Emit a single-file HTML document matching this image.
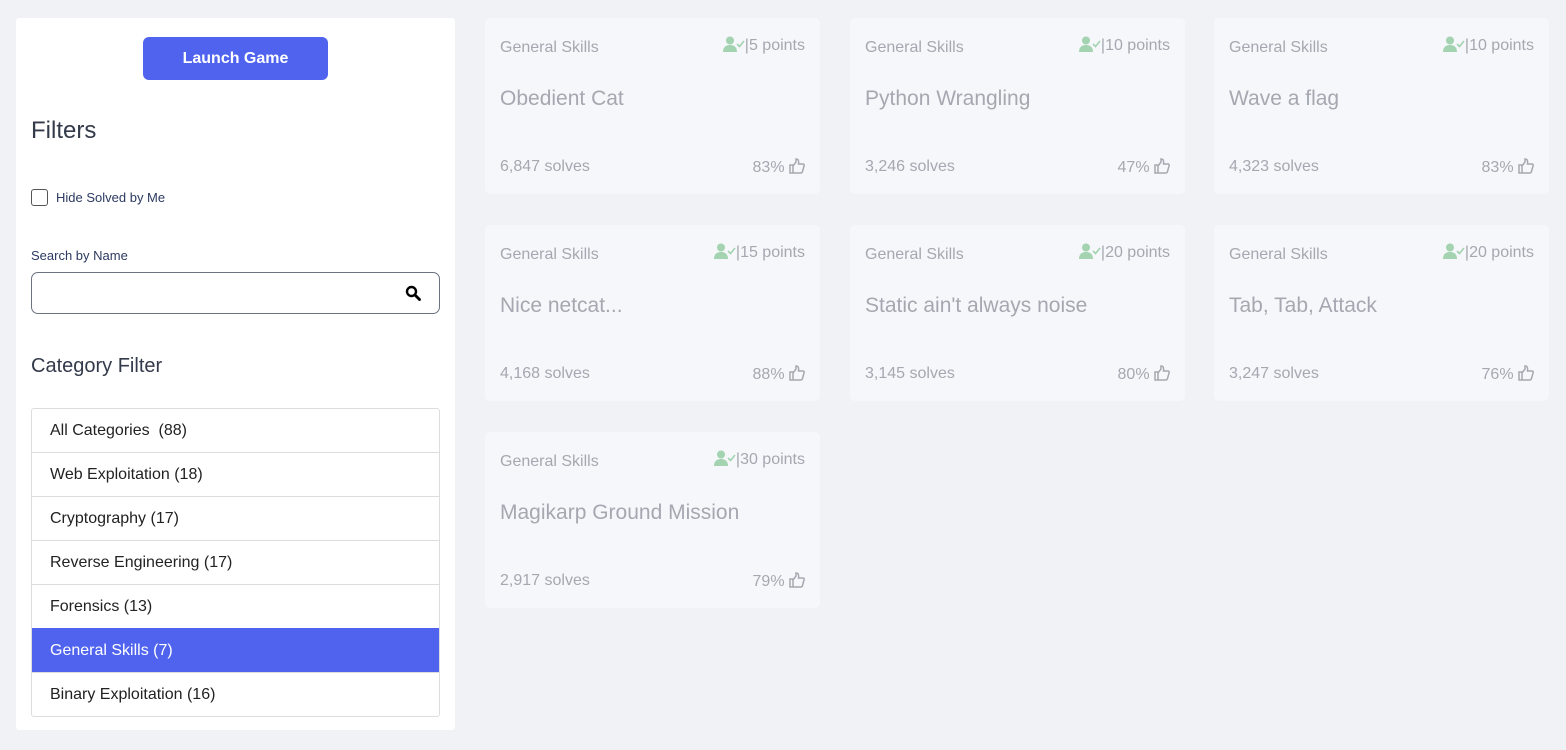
<!DOCTYPE html>
<html><head><style>
body{margin:0;width:1566px;height:750px;background:#f1f2f6;font-family:"Liberation Sans",sans-serif;position:relative;overflow:hidden}
.side{position:absolute;left:16px;top:18px;width:439px;height:712px;background:#fff;border-radius:3px}
.btn{position:absolute;left:127px;top:19px;width:185px;height:43px;background:#4f63ee;color:#fff;border-radius:6px;text-align:center;line-height:43px;font-size:16px;font-weight:bold}
.h{position:absolute;left:15px;color:#333a4a;font-size:22px}
.cb{position:absolute;left:15px;top:171px;width:15px;height:15px;border:1px solid #555;border-radius:3px}
.lbl{position:absolute;color:#2c3a62;font-size:13px}
.search{position:absolute;left:15px;top:254px;width:407px;height:40px;border:1px solid #6b7280;border-radius:7px}
.list{position:absolute;left:15px;top:390px;width:407px;border:1px solid #ddd;border-radius:3px;overflow:hidden}
.list div{height:43px;line-height:43px;padding-left:18px;border-top:1px solid #ddd;font-size:16px;color:#222}
.list div:first-child{border-top:none}
.list .act{background:#4f63ee;color:#fff;border-color:#4f63ee}
.card{position:absolute;width:335px;height:176px;background:#f6f7fb;border-radius:5px;color:#a5a8b0}
.cat{position:absolute;left:15px;top:21px;font-size:16px}
.pts{position:absolute;right:15px;top:18px;font-size:16px}
.t{position:absolute;left:15px;top:69px;font-size:21px}
.s{position:absolute;left:15px;top:140px;font-size:16px}
.r{position:absolute;right:15px;top:140px;font-size:16px}
.u{display:inline-block;vertical-align:-2px}
</style></head><body>
<div class="side">
<div class="btn">Launch Game</div>
<div class="h" style="top:99px;font-size:24px">Filters</div>
<div class="cb"></div>
<div class="lbl" style="left:40px;top:172px">Hide Solved by Me</div>
<div class="lbl" style="left:15px;top:230px">Search by Name</div>
<div class="search"><svg style="position:absolute;right:18px;top:12px" width="16" height="16" viewBox="0 0 16 16"><circle cx="6.5" cy="6.5" r="4.5" fill="none" stroke="#000" stroke-width="2.4"/><path d="M10 10l4.5 4.5" stroke="#000" stroke-width="2.8" stroke-linecap="round"/></svg></div>
<div class="h" style="top:337px;font-size:20px">Category Filter</div>
<div class="list">
<div>All Categories &nbsp;(88)</div><div>Web Exploitation (18)</div><div>Cryptography (17)</div><div>Reverse Engineering (17)</div><div>Forensics (13)</div><div class="act">General Skills (7)</div><div>Binary Exploitation (16)</div>
</div>
</div>
<!--cards-->
<div id="c"></div>
<script>
var d=[["5","Obedient Cat","6,847","83"],["10","Python Wrangling","3,246","47"],["10","Wave a flag","4,323","83"],["15","Nice netcat...","4,168","88"],["20","Static ain't always noise","3,145","80"],["20","Tab, Tab, Attack","3,247","76"],["30","Magikarp Ground Mission","2,917","79"]];
var xs=[485,850,1214],ys=[18,225,432],h="";
var user='<svg class="u" width="22" height="16" viewBox="0 0 22 16"><circle cx="7" cy="4.5" r="4" fill="#a3d3b0"/><path d="M0 16c0-5 3-7 7-7s7 2 7 7z" fill="#a3d3b0"/><path d="M14 8l2.5 2.5L21 5" stroke="#a3d3b0" stroke-width="1.6" fill="none"/></svg>';
var th='<svg class="u" width="16" height="16" viewBox="0 0 16 16"><path d="M1 7h3v8H1zM4 8l3-4V1c2 0 3 1 2.5 5H14c1 0 1.5 1 1 2l-1.5 5.5c-.3 1-1 1.5-2 1.5H4" fill="none" stroke="#a5a8b0" stroke-width="1.5"/></svg>';
d.forEach(function(e,i){h+='<div class="card" style="left:'+xs[i%3]+'px;top:'+ys[Math.floor(i/3)]+'px"><div class="cat">General Skills</div><div class="pts">'+user+'|'+e[0]+' points</div><div class="t">'+e[1]+'</div><div class="s">'+e[2]+' solves</div><div class="r">'+e[3]+'% '+th+'</div></div>'});
document.getElementById("c").innerHTML=h;
</script>
</body></html>
